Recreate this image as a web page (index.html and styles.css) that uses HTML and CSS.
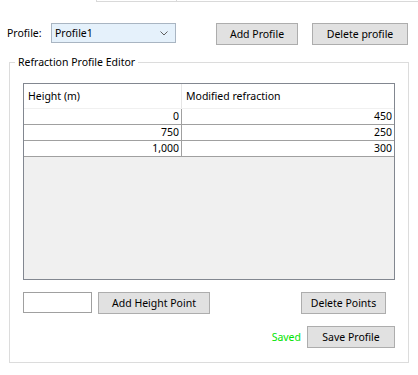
FILE: index.html
```html
<!DOCTYPE html>
<html>
<head>
<meta charset="utf-8">
<link rel="stylesheet" href="styles.css">
</head>
<body>
<div class="tabstrip"><div class="tab"></div></div>
<div class="profile-row">
  <span class="label">Profile:</span>
  <div class="combo">
    <span>Profile1</span>
    <svg class="chevron" width="8" height="5" viewBox="0 0 8 5"><polyline points="0.5,0.5 4,4 7.5,0.5" fill="none" stroke="#606060" stroke-width="1"/></svg>
  </div>
  <button class="btn add-profile">Add Profile</button>
  <button class="btn delete-profile">Delete profile</button>
</div>
<fieldset class="group">
  <legend>Refraction Profile Editor</legend>
  <div class="grid">
    <div class="hrow">
      <div class="hcell c1">Height (m)</div>
      <div class="hcell c2">Modified refraction</div>
    </div>
    <div class="drow"><div class="dcell c1">0</div><div class="dcell c2">450</div></div>
    <div class="drow"><div class="dcell c1">750</div><div class="dcell c2">250</div></div>
    <div class="drow"><div class="dcell c1">1,000</div><div class="dcell c2">300</div></div>
  </div>
  <div class="points-row">
    <input class="textbox" type="text">
    <button class="btn add-point">Add Height Point</button>
    <button class="btn delete-points">Delete Points</button>
  </div>
  <div class="save-row">
    <span class="saved">Saved</span>
    <button class="btn save">Save Profile</button>
  </div>
</fieldset>
</body>
</html>
```
FILE: styles.css
```css
html, body {
  margin: 0;
  padding: 0;
  background: #ffffff;
}
body {
  font-family: "Noto Sans", "Liberation Sans", sans-serif;
  font-size: 10.5px;
  color: #000;
  width: 418px;
  height: 375px;
  overflow: hidden;
}
.tabstrip {
  margin-left: 96px;
  height: 1px;
  border-left: 1px solid #d9d9d9;
  border-bottom: 1px solid #d9d9d9;
  display: flex;
}
.tab {
  width: 79px;
  border-right: 1px solid #d9d9d9;
}
.profile-row {
  display: flex;
  align-items: flex-start;
  margin-top: 21px;
  padding-left: 7px;
  height: 22px;
}
.label {
  width: 44px;
  line-height: 20px;
}
.combo {
  box-sizing: border-box;
  width: 125px;
  height: 20px;
  border: 1px solid #a9b5c2;
  background: #e5f1fb;
  display: flex;
  align-items: center;
  justify-content: space-between;
  padding: 0 7px 0 3px;
}
.chevron {
  display: block;
}
.btn {
  box-sizing: border-box;
  height: 22px;
  margin: 0;
  padding: 0;
  border: 1px solid #adadad;
  background: #e1e1e1;
  font: inherit;
  color: #000;
}
.add-profile {
  margin-left: 40px;
  width: 82px;
}
.delete-profile {
  margin-left: 14px;
  width: 96px;
}
.group {
  box-sizing: border-box;
  width: 400px;
  margin: 10px 0 0 9px;
  padding: 0 13px 14px 13px;
  border: 1px solid #dcdcdc;
  min-width: 0;
}
.group legend {
  margin-left: -8px;
  padding: 0 3px;
  line-height: 15px;
}
.grid {
  box-sizing: border-box;
  margin-top: 13px;
  height: 197px;
  border: 1px solid #828790;
  background: #f0f0f0;
}
.hrow {
  display: flex;
  height: 25px;
  box-sizing: border-box;
  background: #fff;
  border-bottom: 1px solid #f0f0f0;
}
.hcell {
  box-sizing: border-box;
  line-height: 24px;
  padding-left: 4px;
}
.hcell.c1 {
  width: 158px;
  border-right: 1px solid #e5e5e5;
}
.hcell.c2 {
  flex: 1;
}
.drow {
  display: flex;
  height: 16px;
  box-sizing: border-box;
  background: #fff;
  border-bottom: 1px solid #a0a0a0;
}
.dcell {
  box-sizing: border-box;
  line-height: 15px;
  text-align: right;
  padding-right: 2px;
}
.dcell.c1 {
  width: 158px;
  border-right: 1px solid #a0a0a0;
}
.dcell.c2 {
  flex: 1;
}
.points-row {
  display: flex;
  align-items: flex-start;
  margin-top: 12px;
}
.textbox {
  box-sizing: border-box;
  width: 69px;
  height: 21px;
  margin: 0;
  border: 1px solid #a0a0a0;
  background: #fff;
  font: inherit;
}
.add-point {
  margin-left: 6px;
  width: 112px;
}
.delete-points {
  margin-left: auto;
  margin-right: 9px;
  width: 85px;
}
.save-row {
  display: flex;
  justify-content: flex-end;
  align-items: center;
  margin-top: 12px;
}
.saved {
  color: #00e400;
  margin-right: 6px;
}
.save {
  width: 88px;
}
```
